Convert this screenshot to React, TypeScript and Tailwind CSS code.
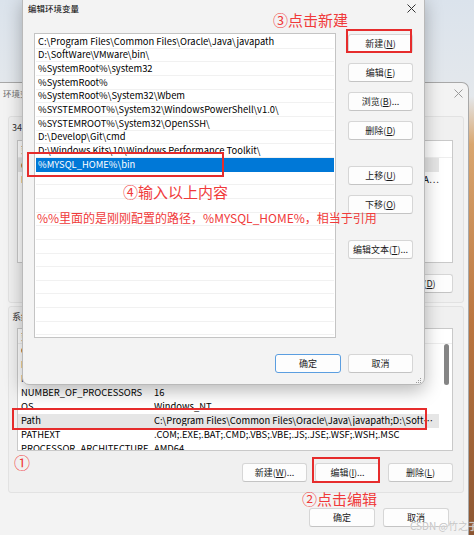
import type { ReactNode } from 'react';

const DIALOG_PATHS = [
  'C:\\Program Files\\Common Files\\Oracle\\Java\\javapath',
  'D:\\SoftWare\\VMware\\bin\\',
  '%SystemRoot%\\system32',
  '%SystemRoot%',
  '%SystemRoot%\\System32\\Wbem',
  '%SYSTEMROOT%\\System32\\WindowsPowerShell\\v1.0\\',
  '%SYSTEMROOT%\\System32\\OpenSSH\\',
  'D:\\Develop\\Git\\cmd',
  'D:\\Windows Kits\\10\\Windows Performance Toolkit\\',
  '%MYSQL_HOME%\\bin',
];

const SYSTEM_VARS: [string, string][] = [
  ['ComSpec', 'C:\\Windows\\system32\\cmd.exe'],
  ['DriverData', 'C:\\Windows\\System32\\Drivers\\DriverData'],
  ['MYSQL_HOME', 'D:\\Develop\\mysql-8.0.31-winx64'],
  ['NUMBER_OF_PROCESSORS', '16'],
  ['OS', 'Windows_NT'],
  [
    'Path',
    'C:\\Program Files\\Common Files\\Oracle\\Java\\javapath;D:\\SoftWare\\VMware\\bin\\;%SystemRoot%\\system32',
  ],
  ['PATHEXT', '.COM;.EXE;.BAT;.CMD;.VBS;.VBE;.JS;.JSE;.WSF;.WSH;.MSC'],
  ['PROCESSOR_ARCHITECTURE', 'AMD64'],
];

function M({ k }: { k: string }) {
  return <span className="underline underline-offset-[1px]">{k}</span>;
}

function Btn({
  children,
  className = '',
  primary = false,
}: {
  children: ReactNode;
  className?: string;
  primary?: boolean;
}) {
  return (
    <div
      className={`flex h-[19px] shrink-0 items-center justify-center rounded-[3px] border bg-[#fdfdfd] text-[9px] leading-none text-[#1a1a1a] ${
        primary ? 'border-[#5b9ee0]' : 'border-[#d6d6d6] border-b-[#c4c4c4]'
      } ${className}`}
    >
      {children}
    </div>
  );
}

function CloseX({ color }: { color: string }) {
  return (
    <svg width="9" height="9" viewBox="0 0 9 9" fill="none" stroke={color} strokeWidth="1">
      <path d="M0.5 0.5 8.5 8.5M8.5 0.5 0.5 8.5" />
    </svg>
  );
}

/** 背景里的“环境变量”窗口 */
function EnvWindow() {
  return (
    <div className="absolute left-0 top-[82px] h-[470px] w-[469px] rounded-tr-[7px] border-r border-t border-[#a8a8a8] bg-[#f3f3f3]">
      <div className="flex h-[20px] items-center justify-between pl-[3px] pr-[5px]">
        <span className="text-[8.5px] text-[#6f6f6f]">环境变量</span>
        <CloseX color="#9a9a9a" />
      </div>

      {/* 用户变量 */}
      <div className="ml-[8px] mt-[13px] h-[187px] w-[456px] rounded-[3px] border border-[#e2e2e2] bg-[#f0f0f0] pl-[3px] pr-[10px] pt-[5px]">
        <div className="h-[12px] text-[9px] leading-[12px] text-[#333]">34 的用户变量(<M k="U" />)</div>
        <div className="ml-[5px] mt-[6px] h-[123px] w-[436px] overflow-hidden border border-[#c9c9c9] bg-white">
          <div className="flex h-[17px] items-center border-b border-[#eeeeee] pl-[3px] text-[9.4px] text-[#333]">
            <span className="w-[133px]">变量</span>
            <span>值</span>
          </div>
          <div className="pr-[13px]">
            <div className="flex h-[14px] items-center bg-[#e6e6e6] pl-[3px] text-[9.4px] text-black">
              <span className="w-[133px]">OneDrive</span>
              <span className="truncate">C:\Users\34\OneDrive</span>
            </div>
            <div className="flex h-[14px] items-center pl-[3px] text-[9.4px] text-black">
              <span className="w-[133px] shrink-0">Path</span>
              <span className="flex-1 text-right">A…</span>
            </div>
          </div>
        </div>
        <div className="mt-[11px] flex justify-end gap-[8px]">
          <Btn className="w-[65px]">
            新建(<M k="N" />)...
          </Btn>
          <Btn className="w-[65px]">
            编辑(<M k="E" />)...
          </Btn>
          <Btn className="w-[65px]">
            删除(<M k="D" />)
          </Btn>
        </div>
      </div>

      {/* 系统变量 */}
      <div className="ml-[8px] mt-[3px] h-[187px] w-[456px] rounded-[3px] border border-[#e2e2e2] bg-[#f0f0f0] pl-[3px] pr-[10px] pt-[4px]">
        <div className="h-[12px] text-[9px] leading-[12px] text-[#333]">系统变量(<M k="S" />)</div>
        <div className="relative ml-[5px] mt-[5px] h-[123px] w-[436px] overflow-hidden border border-[#c9c9c9] bg-white">
          <div className="flex h-[15px] items-center border-b border-[#eeeeee] pl-[3px] text-[9.4px] text-[#333]">
            <span className="w-[133px]">变量</span>
            <span>值</span>
          </div>
          <div className="pr-[13px]">
            {SYSTEM_VARS.map(([name, value]) => (
              <div
                key={name}
                className={`flex h-[14px] items-center pl-[3px] text-[9.4px] leading-none text-black ${
                  name === 'Path' ? 'bg-[#e6e6e6]' : ''
                }`}
              >
                <span className="w-[133px] shrink-0">{name}</span>
                <span className="min-w-0 flex-1 truncate">{value}</span>
              </div>
            ))}
          </div>
          <div className="absolute right-[3px] top-[15px] h-[41px] w-[5px] rounded-full bg-[#858585]" />
        </div>
        <div className="mt-[12px] flex justify-end gap-[8px]">
          <Btn className="w-[65px]">
            新建(<M k="W" />)...
          </Btn>
          <Btn className="w-[65px]">
            编辑(<M k="I" />)...
          </Btn>
          <Btn className="w-[65px]">
            删除(<M k="L" />)
          </Btn>
        </div>
      </div>

      <div className="mt-[15px] flex justify-end gap-[8px] pr-[19px]">
        <Btn className="w-[66px]">确定</Btn>
        <Btn className="w-[66px]">取消</Btn>
      </div>
    </div>
  );
}

/** 前面的“编辑环境变量”对话框 */
function EditDialog() {
  const rows = Array.from({ length: 23 }, (_, i) => DIALOG_PATHS[i] ?? '');
  return (
    <div className="absolute left-[22px] top-[-4px] flex h-[389px] w-[403px] flex-col rounded-b-[7px] border border-[#b9b9b9] bg-[#f3f3f3] shadow-[0_6px_18px_rgba(0,0,0,0.28)]">
      <div className="flex h-[22px] shrink-0 items-center justify-between pl-[5px] pr-[8px]">
        <span className="text-[8.5px] text-black">编辑环境变量</span>
        <CloseX color="#333" />
      </div>

      <div className="mt-[14px] flex pl-[11px]">
        <div className="h-[305px] w-[302px] overflow-hidden border border-[#c4c4c4] bg-white p-[1px]">
          {rows.map((p, i) => (
            <div
              key={i}
              className={`flex h-[13.67px] items-center whitespace-nowrap pl-[2px] text-[9.4px] leading-none ${
                i === 9 ? 'bg-[#0078d7] text-white' : 'border-b border-[#f1f1f1] text-black'
              }`}
            >
              {p}
            </div>
          ))}
        </div>

        <div className="ml-[12px] flex w-[65px] flex-col pt-[1px]">
          <Btn>
            新建(<M k="N" />)
          </Btn>
          <Btn className="mt-[10px]">
            编辑(<M k="E" />)
          </Btn>
          <Btn className="mt-[10px]">
            浏览(<M k="B" />)...
          </Btn>
          <Btn className="mt-[10px]">
            删除(<M k="D" />)
          </Btn>
          <Btn className="mt-[26px]">
            上移(<M k="U" />)
          </Btn>
          <Btn className="mt-[10px]">
            下移(<M k="O" />)
          </Btn>
          <Btn className="mt-[26px]">
            编辑文本(<M k="T" />)...
          </Btn>
        </div>
      </div>

      <div className="relative mt-[16px] flex justify-end gap-[7px] pr-[11px]">
        <Btn primary className="w-[66px]">
          确定
        </Btn>
        <Btn className="w-[65px]">取消</Btn>
        <svg className="absolute bottom-[-11px] right-[2px]" width="6" height="6" viewBox="0 0 6 6" fill="#9a9a9a">
          <rect x="4" y="0" width="1" height="1" />
          <rect x="2" y="2" width="1" height="1" />
          <rect x="4" y="2" width="1" height="1" />
          <rect x="0" y="4" width="1" height="1" />
          <rect x="2" y="4" width="1" height="1" />
          <rect x="4" y="4" width="1" height="1" />
        </svg>
      </div>
    </div>
  );
}

/** 截图上的红色标注 */
function Annotations() {
  return (
    <>
      <div className="absolute left-[346px] top-[29px] h-[24px] w-[66px] border-2 border-[#e62c2c]" />
      <div className="absolute left-[273px] top-[12px] text-[15px] leading-none text-[#f03a3a]">③点击新建</div>

      <div className="absolute left-[27px] top-[152px] h-[25px] w-[197px] border-2 border-[#e62c2c]" />
      <div className="absolute left-[123px] top-[184px] text-[15px] leading-none text-[#f03a3a]">④输入以上内容</div>
      <div className="absolute left-[37px] top-[212px] whitespace-nowrap text-[12px] leading-none text-[#f03a3a]">
        %%里面的是刚刚配置的路径，%MYSQL_HOME%，相当于引用
      </div>

      <div className="absolute left-[12px] top-[408px] h-[22px] w-[415px] border-2 border-[#e62c2c]" />
      <div className="absolute left-[14px] top-[454px] text-[16px] leading-none text-[#f03a3a]">①</div>

      <div className="absolute left-[312px] top-[457px] h-[26px] w-[68px] border-2 border-[#e62c2c]" />
      <div className="absolute left-[302px] top-[491px] text-[15px] leading-none text-[#f03a3a]">②点击编辑</div>

      <div className="absolute left-[410px] top-[521px] whitespace-nowrap text-[10px] leading-none text-[#c4c4c4] [text-shadow:0_0_1px_#fff]">
        CSDN @竹之子
      </div>
    </>
  );
}

export default function App() {
  return (
    <div className="relative h-[535px] w-[474px] overflow-hidden bg-[linear-gradient(to_bottom,#dbe3ec_0%,#e4e8ec_18%,#d9a66f_27%,#bb7640_60%,#8c5632_100%)] font-['Noto_Sans_CJK_SC','Noto_Sans',sans-serif]">
      <EnvWindow />
      <EditDialog />
      <Annotations />
    </div>
  );
}
